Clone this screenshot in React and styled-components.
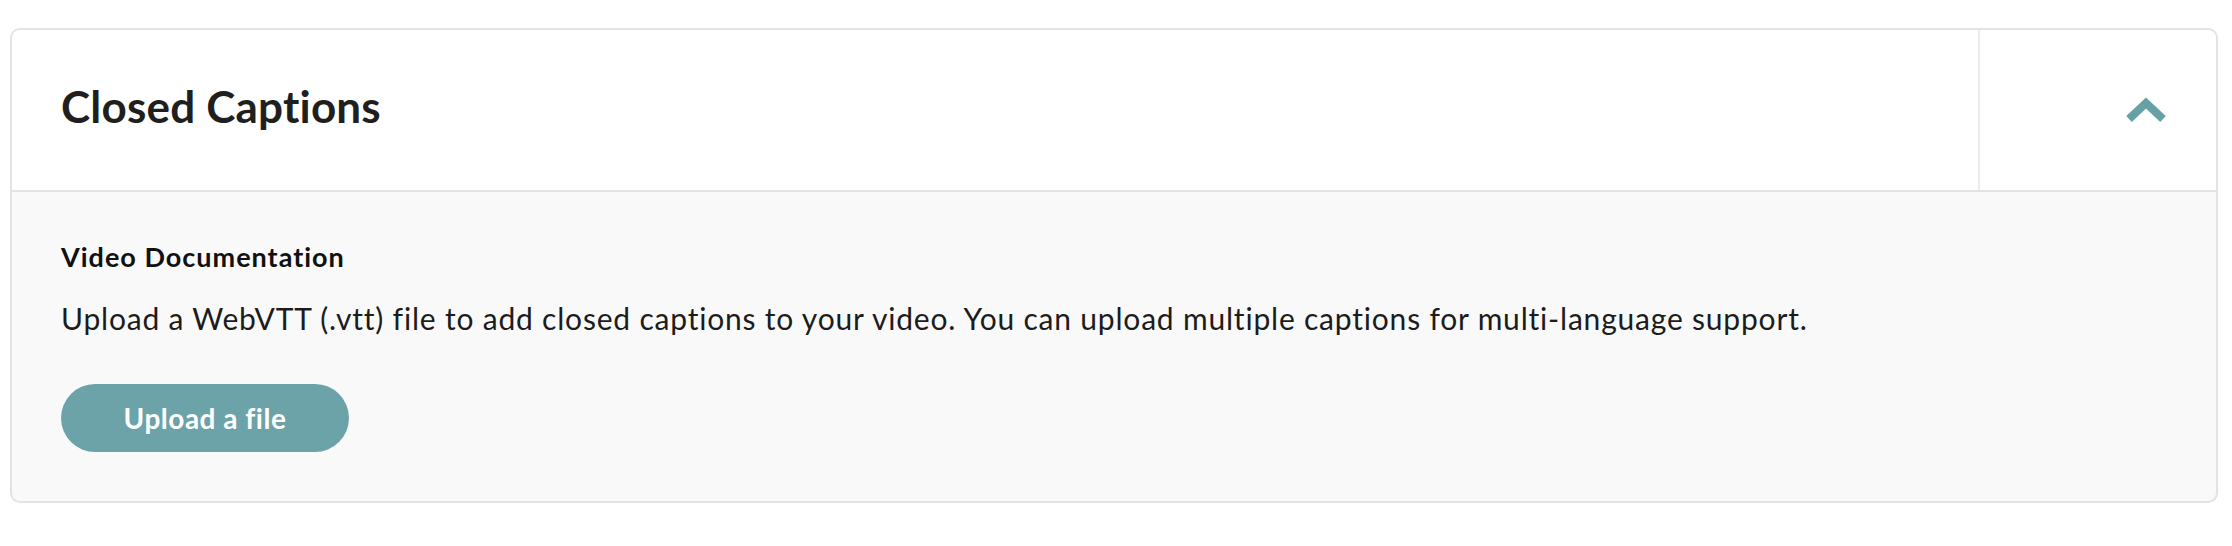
import React from "react";
import styled, { createGlobalStyle } from "styled-components";

const Global = createGlobalStyle`
  html, body { margin: 0; padding: 0; background: #ffffff; }
  body { font-family: Lato, "Open Sans", Arial, sans-serif; color: #1f1f1f; }
`;

const Page = styled.div`
  padding: 28px 14px 44px 10px;
`;

const Card = styled.section`
  border: 2px solid #e3e3e3;
  border-radius: 10px;
  overflow: hidden;
  background: #f9f9f9;
`;

const Header = styled.header`
  display: flex;
  height: 160px;
  background: #ffffff;
  border-bottom: 2px solid #e3e3e3;
`;

const TitleCell = styled.div`
  flex: 1;
  display: flex;
  align-items: center;
  padding: 0 0 8px 49px;
`;

const Title = styled.h2`
  margin: 0;
  font-size: 44px;
  line-height: 53px;
  font-weight: 700;
  color: #1f1f1f;
  letter-spacing: 0.2px;
`;

const ToggleCell = styled.button`
  width: 238px;
  border: none;
  border-left: 2px solid #ececec;
  background: transparent;
  display: flex;
  align-items: center;
  justify-content: flex-end;
  padding: 0 50px 0 0;
  cursor: pointer;
`;

const Body = styled.div`
  padding: 48px 49px 49px;
  display: flex;
  flex-direction: column;
  align-items: flex-start;
`;

const Subtitle = styled.h3`
  margin: 0;
  font-size: 27px;
  line-height: 34px;
  font-weight: 700;
  letter-spacing: 1px;
  color: #111111;
`;

const Text = styled.p`
  margin: 26px 0 0;
  font-size: 30px;
  line-height: 36px;
  letter-spacing: 0.8px;
  color: #1c1c1c;
`;

const UploadButton = styled.button`
  margin-top: 48px;
  width: 288px;
  height: 68px;
  border: none;
  border-radius: 34px;
  background: #6ca3a8;
  color: #ffffff;
  font-family: Lato, "Open Sans", Arial, sans-serif;
  font-size: 28px;
  font-weight: 700;
  letter-spacing: 0.5px;
  cursor: pointer;
`;

const Chevron = () => (
  <svg width="40" height="26" viewBox="0 0 40 26" aria-hidden="true">
    <polyline
      points="3,22 20,6 37,22"
      fill="none"
      stroke="#67a1a6"
      strokeWidth="8"
    />
  </svg>
);

export default function App() {
  return (
    <>
      <Global />
      <Page>
        <Card>
          <Header>
            <TitleCell>
              <Title>Closed Captions</Title>
            </TitleCell>
            <ToggleCell aria-label="Collapse">
              <Chevron />
            </ToggleCell>
          </Header>
          <Body>
            <Subtitle>Video Documentation</Subtitle>
            <Text>
              Upload a WebVTT (.vtt) file to add closed captions to your video. You can upload multiple captions for multi-language support.
            </Text>
            <UploadButton>Upload a file</UploadButton>
          </Body>
        </Card>
      </Page>
    </>
  );
}
